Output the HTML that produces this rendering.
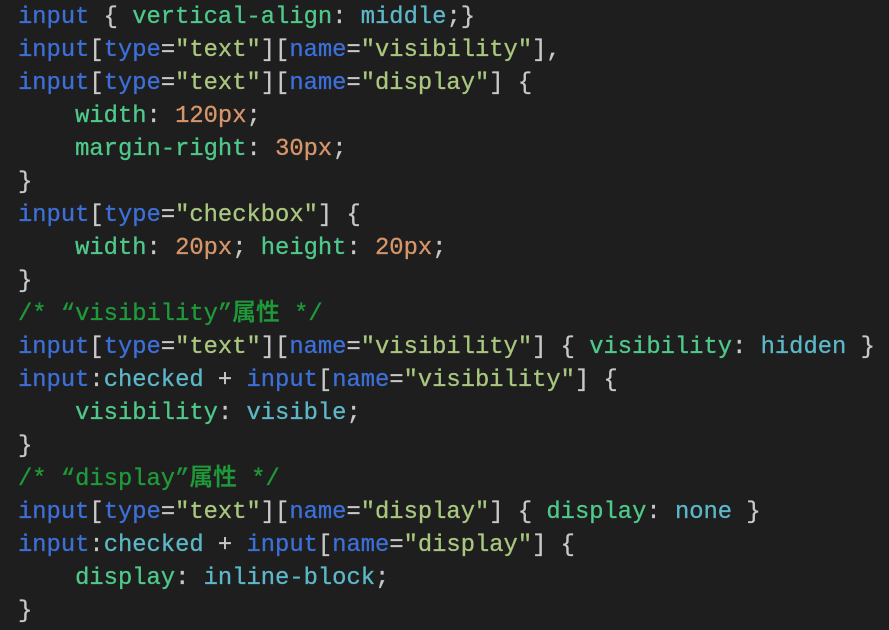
<!DOCTYPE html>
<html><head><meta charset="utf-8"><style>
html,body{margin:0;padding:0;background:#1e1e1e;width:889px;height:630px;overflow:hidden}
pre{margin:0;padding:0 0 0 18px;font-family:"Liberation Mono","Noto Sans CJK SC",monospace;font-size:23.8px;line-height:33px;color:#c8c8c8;position:relative;top:1px;font-weight:500;-webkit-text-stroke:0.3px}
.k{color:#3c6fd8}.p{color:#4ec98a}.v{color:#5cb8c8}.s{color:#a9c77f}.n{color:#d7956a}.c{color:#1f9a3a}.o{color:#c8c8c8}
</style></head><body><pre><span class="k">input</span> { <span class="p">vertical-align</span>: <span class="v">middle</span>;}
<span class="k">input</span>[<span class="k">type</span>=<span class="s">"text"</span>][<span class="k">name</span>=<span class="s">"visibility"</span>],
<span class="k">input</span>[<span class="k">type</span>=<span class="s">"text"</span>][<span class="k">name</span>=<span class="s">"display"</span>] {
    <span class="p">width</span>: <span class="n">120px</span>;
    <span class="p">margin-right</span>: <span class="n">30px</span>;
}
<span class="k">input</span>[<span class="k">type</span>=<span class="s">"checkbox"</span>] {
    <span class="p">width</span>: <span class="n">20px</span>; <span class="p">height</span>: <span class="n">20px</span>;
}
<span class="c">/* “visibility”属性 */</span>
<span class="k">input</span>[<span class="k">type</span>=<span class="s">"text"</span>][<span class="k">name</span>=<span class="s">"visibility"</span>] { <span class="p">visibility</span>: <span class="v">hidden</span> }
<span class="k">input</span>:<span class="v">checked</span> + <span class="k">input</span>[<span class="k">name</span>=<span class="s">"visibility"</span>] {
    <span class="p">visibility</span>: <span class="v">visible</span>;
}
<span class="c">/* “display”属性 */</span>
<span class="k">input</span>[<span class="k">type</span>=<span class="s">"text"</span>][<span class="k">name</span>=<span class="s">"display"</span>] { <span class="p">display</span>: <span class="v">none</span> }
<span class="k">input</span>:<span class="v">checked</span> + <span class="k">input</span>[<span class="k">name</span>=<span class="s">"display"</span>] {
    <span class="p">display</span>: <span class="v">inline-block</span>;
}</pre></body></html>
